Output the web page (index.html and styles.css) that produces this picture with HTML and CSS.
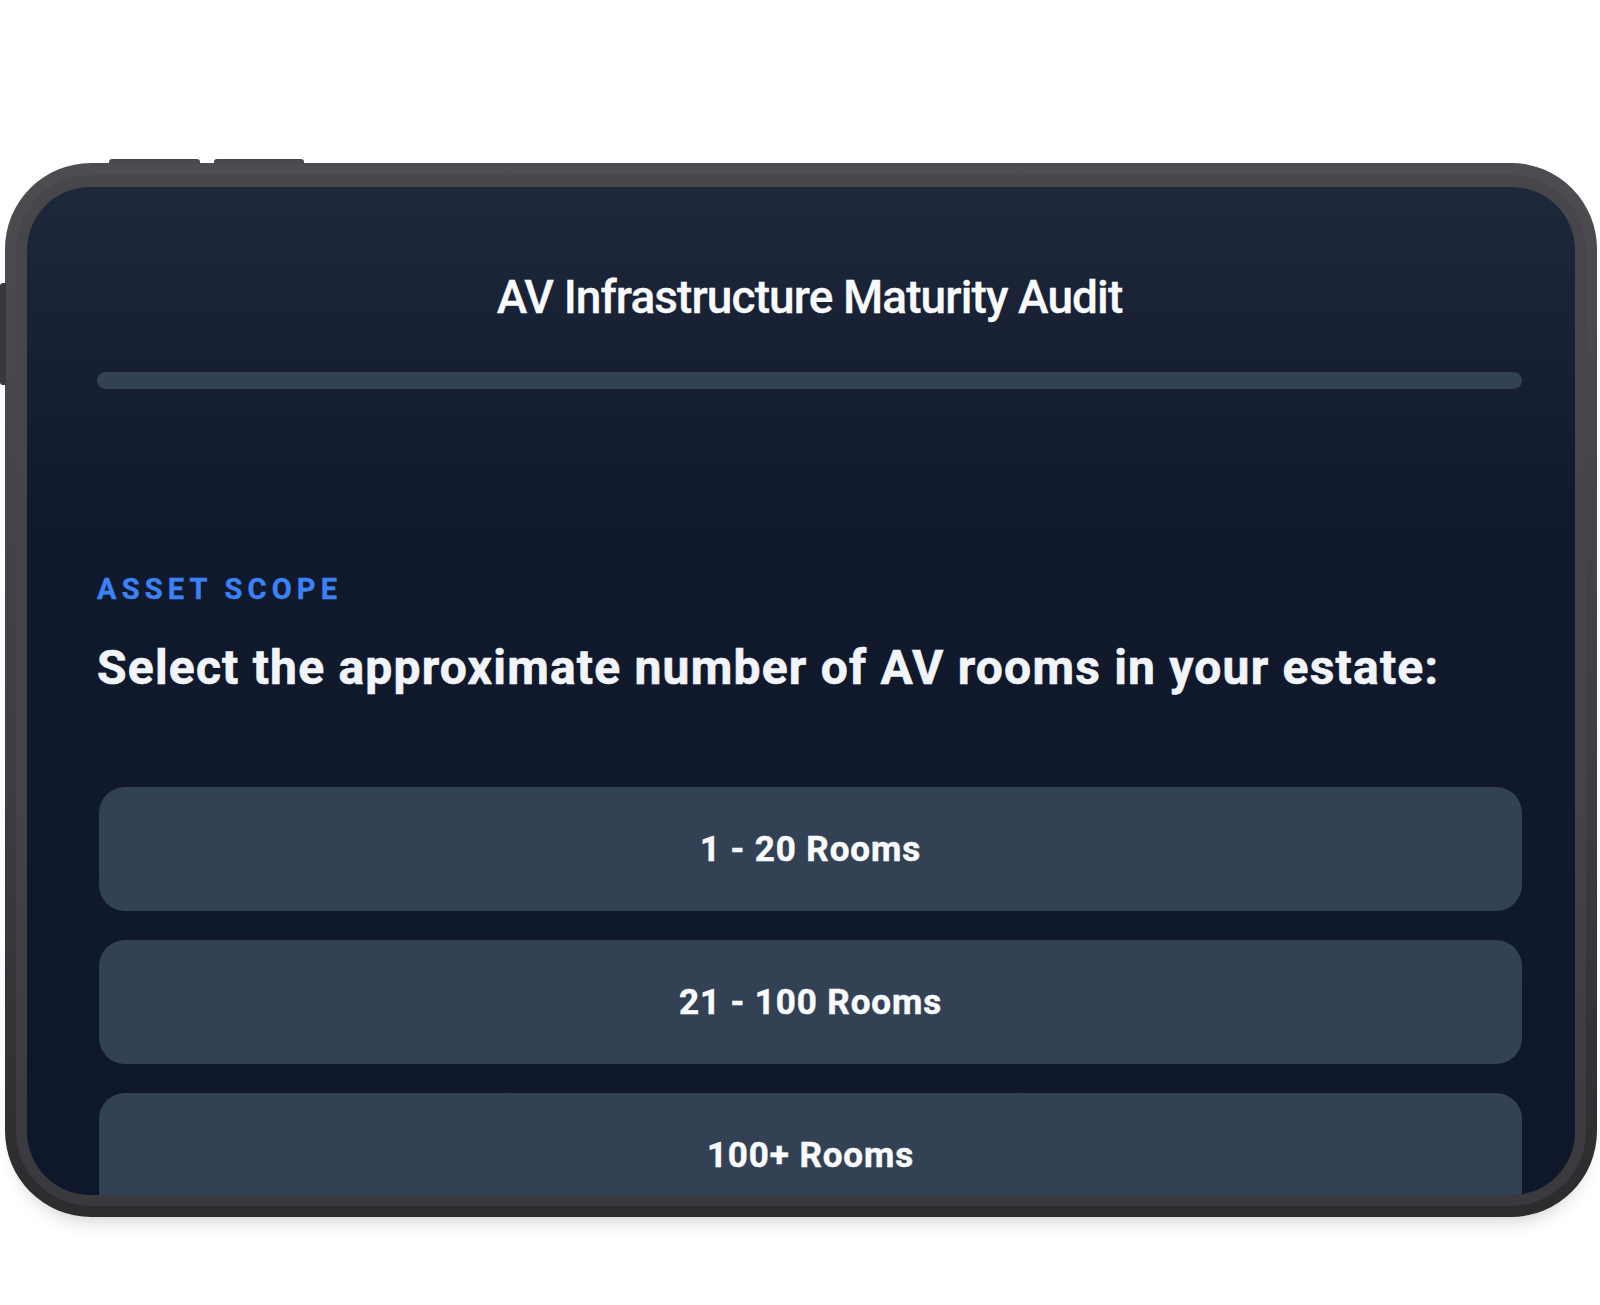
FILE: index.html
```html
<!DOCTYPE html>
<html lang="en">
<head>
<meta charset="utf-8">
<title>AV Infrastructure Maturity Audit</title>
<link rel="stylesheet" href="styles.css">
</head>
<body>
<div class="stage">
  <div class="device">
    <span class="hw-btn hw-top hw-top-1"></span>
    <span class="hw-btn hw-top hw-top-2"></span>
    <span class="hw-btn hw-side"></span>
    <div class="bezel">
      <div class="screen">
        <div class="content">
          <h1 class="title">AV Infrastructure Maturity Audit</h1>
          <div class="progress"><div class="progress-fill" style="width:0%"></div></div>
          <div class="eyebrow">ASSET SCOPE</div>
          <h2 class="question">Select the approximate number of AV rooms in your estate:</h2>
          <div class="options">
            <button class="option">1 - 20 Rooms</button>
            <button class="option">21 - 100 Rooms</button>
            <button class="option">100+ Rooms</button>
          </div>
        </div>
      </div>
    </div>
  </div>
</div>
</body>
</html>
```
FILE: styles.css
```css
html, body {
  margin: 0;
  padding: 0;
  background: #ffffff;
  height: 100%;
  overflow: hidden;
}

.stage {
  padding-top: 163px;
  padding-left: 5px;
}

.device {
  position: relative;
  width: 1592px;
  height: 1054px;
  box-sizing: border-box;
  border-radius: 86px;
  padding: 12px 11px 11px 11px;
  background: linear-gradient(180deg, #4c4c51 0%, #3d3d41 60%, #2c2c2f 100%);
  box-shadow: 0 14px 18px -10px rgba(0, 0, 0, 0.18);
}

.hw-btn {
  position: absolute;
  background: #48484d;
}

.hw-top {
  top: -4px;
  height: 5px;
  border-radius: 3px 3px 0 0;
}

.hw-top-1 { left: 104px; width: 91px; }
.hw-top-2 { left: 209px; width: 90px; }

.hw-side {
  left: -5px;
  top: 120px;
  width: 6px;
  height: 102px;
  border-radius: 3px 0 0 3px;
  background: #38383c;
}

.bezel {
  height: 100%;
  box-sizing: border-box;
  border-radius: 75px;
  padding: 12px 11px 11px 11px;
  background: linear-gradient(180deg, #46464b 0%, #444448 60%, #3a3a3e 100%);
}

.screen {
  height: 100%;
  box-sizing: border-box;
  border-radius: 63px;
  overflow: hidden;
  background: linear-gradient(180deg, #1e283a 0%, #111a2c 32%, #0f172a 100%);
  font-family: Roboto, "Noto Sans", "Liberation Sans", sans-serif;
}

.content {
  padding: 83px 53px 0 70px;
  display: flex;
  flex-direction: column;
}

.title {
  margin: 0;
  text-align: center;
  font-size: 46px;
  line-height: 54px;
  font-weight: 500;
  letter-spacing: -0.9px;
  color: #f8fafc;
  -webkit-text-stroke: 0.3px #f8fafc;
}

.progress {
  margin-top: 48px;
  height: 17px;
  border-radius: 9px;
  background: #334155;
  overflow: hidden;
}

.progress-fill {
  height: 100%;
  background: #3b82f6;
}

.eyebrow {
  margin-top: 183px;
  font-size: 29px;
  line-height: 34px;
  font-weight: 700;
  letter-spacing: 5.2px;
  color: #3b82f6;
  -webkit-text-stroke: 0.4px #3b82f6;
}

.question {
  margin: 34px 0 0 0;
  font-size: 48px;
  line-height: 56px;
  font-weight: 700;
  letter-spacing: 1.2px;
  color: #f1f5f9;
  -webkit-text-stroke: 0.6px #f1f5f9;
}

.options {
  margin-top: 91px;
  display: flex;
  flex-direction: column;
  gap: 29px;
}

.option {
  height: 124px;
  margin: 0 0 0 2px;
  border: none;
  border-radius: 26px;
  background: #334155;
  color: #f8fafc;
  font-family: Roboto, "Noto Sans", "Liberation Sans", sans-serif;
  font-size: 35px;
  font-weight: 700;
  letter-spacing: 0.9px;
  -webkit-text-stroke: 0.5px #f8fafc;
  cursor: pointer;
}
```
